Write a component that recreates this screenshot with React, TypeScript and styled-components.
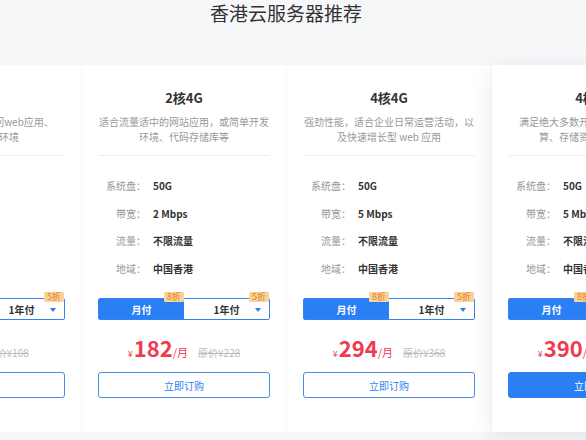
import styled, { createGlobalStyle } from 'styled-components';

const GlobalStyle = createGlobalStyle`
  html, body {
    margin: 0;
    padding: 0;
  }
  body {
    background: #f6f7f9;
    font-family: "Noto Sans CJK SC", "Noto Sans", sans-serif;
    color: #333;
  }
`;

type Plan = {
  name: string;
  desc: string[];
  disk: string;
  bandwidth: string;
  traffic: string;
  region: string;
  price: number;
  original: number;
  featured?: boolean;
};

const plans: Plan[] = [
  {
    name: '1核2G',
    desc: ['适合低流量网站、访问web应用、', '小型开发测试环境'],
    disk: '40G',
    bandwidth: '1 Mbps',
    traffic: '不限流量',
    region: '中国香港',
    price: 86,
    original: 108
  },
  {
    name: '2核4G',
    desc: ['适合流量适中的网站应用，或简单开发', '环境、代码存储库等'],
    disk: '50G',
    bandwidth: '2 Mbps',
    traffic: '不限流量',
    region: '中国香港',
    price: 182,
    original: 228
  },
  {
    name: '4核4G',
    desc: ['强劲性能，适合企业日常运营活动，以', '及快速增长型 web 应用'],
    disk: '50G',
    bandwidth: '5 Mbps',
    traffic: '不限流量',
    region: '中国香港',
    price: 294,
    original: 368
  },
  {
    name: '4核8G',
    desc: ['满足绝大多数开发、测试及科学计', '算、存储资源需求的场景'],
    disk: '50G',
    bandwidth: '5 Mbps',
    traffic: '不限流量',
    region: '中国香港',
    price: 390,
    original: 488,
    featured: true
  }
];

export default function App() {
  return (
    <Page>
      <GlobalStyle />
      <Title>香港云服务器推荐</Title>
      <Track>
        {plans.map((plan) => (
          <Card key={plan.name} $featured={plan.featured}>
            <Name>{plan.name}</Name>
            <Desc>
              {plan.desc.map((line) => (
                <span key={line}>{line}</span>
              ))}
            </Desc>
            <Divider />
            <Specs>
              <SpecRow>
                <Label>系统盘：</Label>
                <Value>{plan.disk}</Value>
              </SpecRow>
              <SpecRow>
                <Label>带宽：</Label>
                <Value>{plan.bandwidth}</Value>
              </SpecRow>
              <SpecRow>
                <Label>流量：</Label>
                <Value>{plan.traffic}</Value>
              </SpecRow>
              <SpecRow>
                <Label>地域：</Label>
                <Value>{plan.region}</Value>
              </SpecRow>
            </Specs>
            <Tabs>
              <Tab $active>
                月付
                <Badge>8折</Badge>
              </Tab>
              <Tab>
                1年付
                <Badge>5折</Badge>
                <Caret />
              </Tab>
            </Tabs>
            <PriceRow>
              <Yen>¥</Yen>
              <Amount>{plan.price}</Amount>
              <Unit>/月</Unit>
              <Original>原价¥{plan.original}</Original>
            </PriceRow>
            <BuyButton $featured={plan.featured}>立即订购</BuyButton>
          </Card>
        ))}
      </Track>
    </Page>
  );
}

const Page = styled.div`
  width: 586px;
  height: 440px;
  overflow: hidden;
`;

const Title = styled.h2`
  margin: 0;
  height: 65px;
  padding-right: 14px;
  font-size: 19px;
  line-height: 26px;
  font-weight: 400;
  text-align: center;
  color: #333;
`;

const Track = styled.div`
  display: flex;
  gap: 1px;
  margin-left: -123px;
`;

const Card = styled.div<{ $featured?: boolean }>`
  flex: 0 0 204px;
  height: 367px;
  box-sizing: border-box;
  padding: 24px 16px 0;
  display: flex;
  flex-direction: column;
  background: #fff;
  box-shadow: ${(p) => (p.$featured ? '0 6px 24px rgba(30, 40, 60, 0.09)' : 'none')};
  position: relative;
  z-index: ${(p) => (p.$featured ? 1 : 0)};
`;

const Name = styled.div`
  font-size: 13px;
  line-height: 18px;
  font-weight: 700;
  text-align: center;
  color: #333;
`;

const Desc = styled.div`
  margin-top: 7px;
  display: flex;
  flex-direction: column;
  align-items: center;
  font-size: 10px;
  line-height: 15px;
  color: #999;
  white-space: nowrap;
`;

const Divider = styled.div`
  margin-top: 11px;
  height: 1px;
  background: #eee;
`;

const Specs = styled.div`
  padding-top: 16px;
`;

const SpecRow = styled.div`
  display: flex;
  align-items: center;
  height: 27.5px;
  font-size: 10px;
`;

const Label = styled.span`
  width: 48px;
  text-align: right;
  color: #999;
`;

const Value = styled.span`
  margin-left: 7px;
  font-weight: 700;
  color: #333;
`;

const Tabs = styled.div`
  margin-top: 16px;
  height: 22px;
  box-sizing: border-box;
  display: flex;
  border: 1px solid #3583f2;
  border-radius: 2px;
`;

const Tab = styled.div<{ $active?: boolean }>`
  position: relative;
  flex: 1;
  display: flex;
  align-items: center;
  justify-content: center;
  font-size: 10px;
  font-weight: 700;
  background: ${(p) => (p.$active ? '#2a7ff5' : '#fff')};
  color: ${(p) => (p.$active ? '#fff' : '#333')};
`;

const Badge = styled.span`
  position: absolute;
  top: -7px;
  right: 0;
  height: 10px;
  padding: 0 3px;
  font-size: 9px;
  line-height: 10px;
  font-weight: 400;
  color: #e5801a;
  background: #f8d39b;
  border-radius: 1px;
`;

const Caret = styled.span`
  position: absolute;
  right: 8px;
  top: 9px;
  width: 0;
  height: 0;
  border-top: 4px solid #2a7ff5;
  border-left: 3.5px solid transparent;
  border-right: 3.5px solid transparent;
`;

const PriceRow = styled.div`
  margin-top: 12px;
  height: 30px;
  display: flex;
  align-items: baseline;
  justify-content: center;
  line-height: 30px;
  color: #ee3b4f;
  white-space: nowrap;
`;

const Yen = styled.span`
  font-size: 9px;
  margin-right: 1px;
`;

const Amount = styled.span`
  font-size: 22px;
  font-weight: 700;
`;

const Unit = styled.span`
  font-size: 11px;
`;

const Original = styled.span`
  margin-left: 10px;
  font-size: 10px;
  color: #bbb;
  text-decoration: line-through;
`;

const BuyButton = styled.button<{ $featured?: boolean }>`
  margin-top: 10px;
  height: 26px;
  box-sizing: border-box;
  border: 1px solid ${(p) => (p.$featured ? '#2a7ff5' : '#4a8ce6')};
  border-radius: 3px;
  background: ${(p) => (p.$featured ? '#2a7ff5' : '#fff')};
  color: ${(p) => (p.$featured ? '#fff' : '#2a7ff5')};
  font-family: inherit;
  font-size: 10px;
  cursor: pointer;
`;
